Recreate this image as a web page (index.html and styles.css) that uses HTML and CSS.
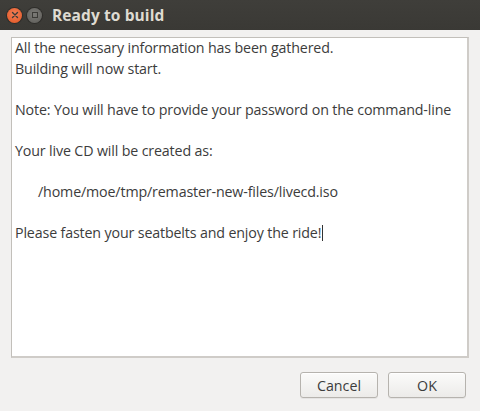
FILE: index.html
```html
<!DOCTYPE html>
<html>
<head>
<meta charset="utf-8">
<link rel="stylesheet" href="styles.css">
</head>
<body>
<div class="window">
  <div class="titlebar">
    <div class="controls">
      <span class="btn-close"><svg width="10" height="10" viewBox="0 0 10 10"><path d="M2.5 2.5 L7.5 7.5 M7.5 2.5 L2.5 7.5" stroke="#3c3b37" stroke-width="1.4" stroke-linecap="round"/></svg></span>
      <span class="btn-max"><svg width="10" height="10" viewBox="0 0 10 10"><rect x="2.5" y="2.5" width="5" height="5" fill="none" stroke="#3c3b37" stroke-width="1"/></svg></span>
    </div>
    <div class="title">Ready to build</div>
  </div>
  <div class="content">
    <div class="textview">
      <div class="line">All the necessary information has been gathered.</div>
      <div class="line">Building will now start.</div>
      <div class="line blank">&nbsp;</div>
      <div class="line">Note: You will have to provide your password on the command-line</div>
      <div class="line blank">&nbsp;</div>
      <div class="line">Your live CD will be created as:</div>
      <div class="line blank">&nbsp;</div>
      <div class="line indent">/home/moe/tmp/remaster-new-files/livecd.iso</div>
      <div class="line blank">&nbsp;</div>
      <div class="line">Please fasten your seatbelts and enjoy the ride!<span class="caret"></span></div>
    </div>
    <div class="actions">
      <button class="button">Cancel</button>
      <button class="button">OK</button>
    </div>
  </div>
</div>
</body>
</html>
```
FILE: styles.css
```css
html, body {
  margin: 0;
  padding: 0;
  width: 480px;
  height: 411px;
  overflow: hidden;
  background: #f2f1f0;
  font-family: "Open Sans", "DejaVu Sans", sans-serif;
}
.window {
  display: flex;
  flex-direction: column;
  height: 411px;
}
.titlebar {
  height: 30px;
  background: linear-gradient(#3f3e3a, #3a3935);
  display: flex;
  align-items: center;
  padding-left: 7px;
  gap: 10px;
}
.controls {
  display: flex;
  gap: 5px;
  align-items: center;
}
.btn-close, .btn-max {
  width: 15px;
  height: 15px;
  border-radius: 50%;
  display: flex;
  align-items: center;
  justify-content: center;
}
.btn-close {
  background: radial-gradient(circle at 50% 40%, #f58159, #e0531f);
  box-shadow: 0 0 0 1px #2e2d2a;
}
.btn-max {
  background: radial-gradient(circle at 50% 40%, #7c7b77, #5d5c58);
  box-shadow: 0 0 0 1px #2e2d2a;
}
.title {
  color: #dfdbd2;
  font-weight: bold;
  font-size: 15.5px;
  letter-spacing: 0.1px;
}
.content {
  flex: 1;
  display: flex;
  flex-direction: column;
  padding: 7px 11px 12px 11px;
}
.textview {
  height: 321px;
  background: #fff;
  border: 1px solid #c2bfba;
  border-right: 2px solid #cfccc8;
  border-bottom: 2px solid #cfccc8;
  box-sizing: border-box;
  padding: 0 0 0 3px;
  color: #3c3c3c;
  font-size: 14.25px;
  letter-spacing: -0.15px;
}
.line {
  height: 20.5px;
  line-height: 20.5px;
  white-space: nowrap;
}
.indent {
  padding-left: 23px;
}
.caret {
  display: inline-block;
  width: 1px;
  height: 16px;
  background: #333;
  vertical-align: -3px;
  margin-left: 1px;
}
.actions {
  display: flex;
  justify-content: flex-end;
  gap: 10px;
  margin-top: 14px;
  padding-right: 3px;
}
.button {
  width: 78px;
  height: 26px;
  border: 1px solid #b6b3ae;
  border-radius: 3px;
  background: linear-gradient(#fbfbfa, #ecebe9);
  box-shadow: inset 0 1px 0 #fff, 0 1px 0 rgba(0,0,0,0.05);
  color: #3c3c3c;
  font-family: "Open Sans", "DejaVu Sans", sans-serif;
  font-size: 14.25px;
  padding: 0;
}
```
